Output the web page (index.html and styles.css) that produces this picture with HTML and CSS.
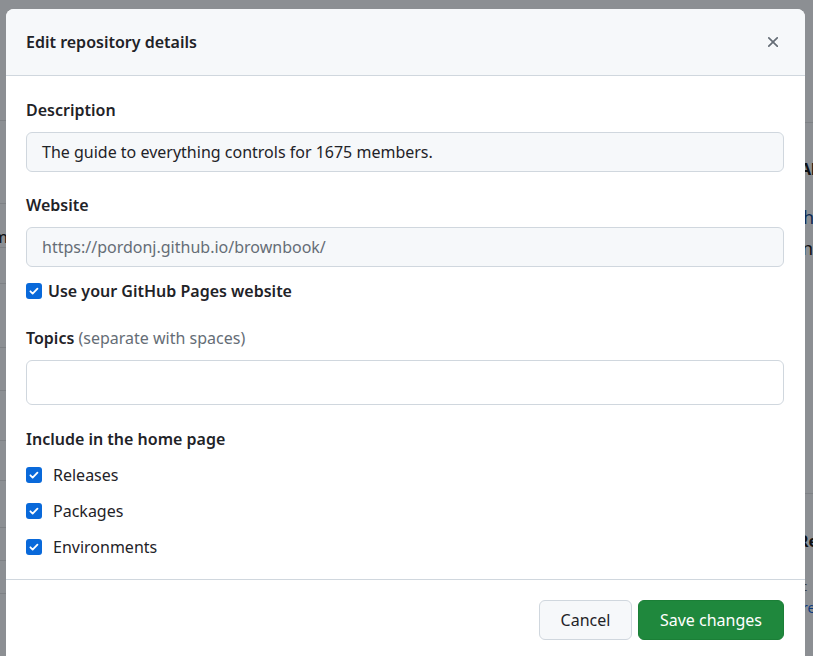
FILE: index.html
```html
<!DOCTYPE html>
<html lang="en">
<head>
<meta charset="utf-8">
<title>Edit repository details</title>
<link rel="stylesheet" href="styles.css">
</head>
<body>
<div class="backdrop">
  <div class="bg-left">
    <i class="ln l1"></i><i class="ln l2"></i><i class="ln l3"></i><i class="ln l4"></i><i class="ln l5"></i><i class="ln l6"></i><i class="ln l7"></i><i class="ln l8"></i><i class="ln l9"></i><i class="ln l10"></i><i class="ln l11"></i>
    <span class="bg-txt lm">m</span>
  </div>
  <div class="bg-right">
    <i class="ln r1"></i><i class="ln r2"></i>
    <span class="bg-txt ab">Ab</span>
    <span class="bg-txt rh">h</span>
    <span class="bg-txt rn">n</span>
    <span class="bg-txt re">Re</span>
    <span class="bg-txt rc">c</span>
    <span class="bg-txt rre">re</span>
  </div>
</div>
<div class="dialog">
  <div class="dialog-header">
    <h1 class="dialog-title">Edit repository details</h1>
    <button class="close-btn" aria-label="Close">
      <svg width="18" height="18" viewBox="0 0 16 16"><path d="M3.72 3.72a.75.75 0 0 1 1.06 0L8 6.94l3.22-3.22a.749.749 0 0 1 1.275.326.749.749 0 0 1-.215.734L9.06 8l3.22 3.22a.749.749 0 0 1-.326 1.275.749.749 0 0 1-.734-.215L8 9.06l-3.22 3.22a.751.751 0 0 1-1.042-.018.751.751 0 0 1-.018-1.042L6.94 8 3.72 4.78a.75.75 0 0 1 0-1.06Z" fill="currentColor"/></svg>
    </button>
  </div>
  <div class="dialog-body">
    <div class="field">
      <label class="field-label">Description</label>
      <div class="input filled">The guide to everything controls for 1675 members.</div>
    </div>
    <div class="field website">
      <label class="field-label">Website</label>
      <div class="input disabled">https://pordonj.github.io/brownbook/</div>
      <div class="check bold-check"><span class="box"><svg viewBox="0 0 16 16" width="12" height="12"><path d="M3.2 8.4l3 3 6.4-6.6" fill="none" stroke="#fff" stroke-width="2.4" stroke-linecap="round" stroke-linejoin="round"/></svg></span><span>Use your GitHub Pages website</span></div>
    </div>
    <div class="field topics">
      <label class="field-label">Topics <span class="muted">(separate with spaces)</span></label>
      <div class="input empty"></div>
    </div>
    <div class="field last">
      <label class="field-label">Include in the home page</label>
      <div class="check list-check"><span class="box"><svg viewBox="0 0 16 16" width="12" height="12"><path d="M3.2 8.4l3 3 6.4-6.6" fill="none" stroke="#fff" stroke-width="2.4" stroke-linecap="round" stroke-linejoin="round"/></svg></span><span>Releases</span></div>
      <div class="check list-check"><span class="box"><svg viewBox="0 0 16 16" width="12" height="12"><path d="M3.2 8.4l3 3 6.4-6.6" fill="none" stroke="#fff" stroke-width="2.4" stroke-linecap="round" stroke-linejoin="round"/></svg></span><span>Packages</span></div>
      <div class="check list-check"><span class="box"><svg viewBox="0 0 16 16" width="12" height="12"><path d="M3.2 8.4l3 3 6.4-6.6" fill="none" stroke="#fff" stroke-width="2.4" stroke-linecap="round" stroke-linejoin="round"/></svg></span><span>Environments</span></div>
    </div>
  </div>
  <div class="dialog-footer">
    <button class="btn btn-default">Cancel</button>
    <button class="btn btn-primary">Save changes</button>
  </div>
</div>
</body>
</html>
```
FILE: styles.css
```css
html, body {
  margin: 0;
  padding: 0;
  height: 100%;
  overflow: hidden;
}
body {
  background: #8c8f93;
  font-family: "Noto Sans", "Open Sans", sans-serif;
  color: #1f2328;
  position: relative;
}
.backdrop {
  position: absolute;
  inset: 0;
}
.bg-left, .bg-right {
  position: absolute;
  top: 0;
  bottom: 0;
}
.bg-left { left: 0; width: 6px; }
.bg-right { left: 805px; right: 0; }
.ln {
  position: absolute;
  left: 0;
  right: 0;
  height: 1px;
  background: #7e8185;
}
.l1 { top: 120px; } .l2 { top: 203px; } .l3 { top: 247px; } .l4 { top: 283px; }
.l5 { top: 347px; } .l6 { top: 390px; } .l7 { top: 440px; } .l8 { top: 480px; }
.l9 { top: 527px; } .l10 { top: 560px; } .l11 { top: 593px; }
.r1 { top: 122px; } .r2 { top: 493px; }
.bg-txt {
  position: absolute;
  font-size: 16px;
  color: #0f1114;
  white-space: nowrap;
}
.lm { top: 226px; left: -7px; }
.ab { top: 158px; left: -5px; font-weight: 700; }
.rh { top: 205px; left: -2px; color: #0b2a55; font-size: 18px; }
.rn { top: 236px; left: -3px; font-size: 18px; }
.re { top: 530px; left: -7px; font-weight: 700; }
.rc { top: 577px; left: -4px; font-size: 13px; color: #3c3f44; }
.rre { top: 598px; left: -3px; font-size: 14px; color: #0a3a80; }

.dialog {
  position: relative;
  margin: 9px 8px 0 6px;
  background: #fff;
  border-radius: 8px 8px 0 0;
  height: 700px;
  overflow: hidden;
}
.dialog-header {
  height: 66px;
  background: #f6f8fa;
  border-bottom: 1px solid #d0d7de;
  display: flex;
  align-items: center;
  justify-content: space-between;
  padding: 0 20px;
}
.dialog-title {
  margin: 0;
  font-size: 16px;
  font-weight: 600;
  color: #1f2328;
}
.close-btn {
  background: none;
  border: 0;
  padding: 0;
  width: 24px;
  height: 24px;
  display: flex;
  align-items: center;
  justify-content: center;
  color: #656d76;
}
.dialog-body {
  padding: 23px 21px 0 20px;
  border-bottom: 1px solid #d0d7de;
}
.field {
  margin-bottom: 22px;
}
.field.website { margin-bottom: 25px; }
.field.topics { margin-bottom: 23px; }
.field.last { margin-bottom: 21px; }
.field-label {
  display: block;
  font-size: 16px;
  font-weight: 600;
  line-height: 22px;
  margin-bottom: 11px;
}
.field.last .field-label { margin-bottom: 14px; }
.muted {
  font-weight: 400;
  color: #656d76;
}
.input {
  box-sizing: border-box;
  height: 40px;
  border: 1px solid #d0d7de;
  border-radius: 6px;
  padding: 0 15px;
  font-size: 16px;
  display: flex;
  align-items: center;
}
.input.filled { background: #f6f8fa; color: #1f2328; }
.input.disabled { background: #f6f8fa; color: #656d76; }
.input.empty { background: #fff; height: 45px; }
.check {
  display: flex;
  align-items: center;
  font-size: 16px;
  line-height: 22px;
}
.bold-check {
  font-weight: 600;
  margin-top: 13px;
  gap: 6px;
}
.list-check {
  gap: 11px;
  margin-bottom: 14px;
}
.list-check:last-child { margin-bottom: 0; }
.box {
  width: 16px;
  height: 16px;
  border-radius: 3px;
  background: #0969da;
  display: flex;
  align-items: center;
  justify-content: center;
  flex: none;
}
.dialog-footer {
  display: flex;
  justify-content: flex-end;
  gap: 6px;
  padding: 20px 21px 0 20px;
}
.btn {
  height: 40px;
  border-radius: 6px;
  font-family: inherit;
  font-size: 16px;
  padding: 0 19px;
  box-sizing: border-box;
  cursor: pointer;
}
.btn-default {
  background: #f6f8fa;
  border: 1px solid #d0d7de;
  color: #1f2328;
  width: 93px;
}
.btn-primary {
  background: #1f883d;
  border: 1px solid #1b7f37;
  color: #fff;
  width: 146px;
}
```
